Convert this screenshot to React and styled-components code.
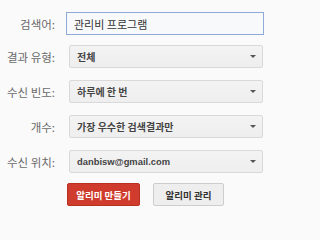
import React from 'react'
import styled, { createGlobalStyle } from 'styled-components'

const Global = createGlobalStyle`
  html, body {
    margin: 0;
    padding: 0;
    background: #fafafa;
  }
  body {
    font-family: "Noto Sans CJK KR", "Liberation Sans", sans-serif;
  }
`

const Form = styled.div`
  width: 270px;
  height: 217px;
  box-sizing: border-box;
  padding: 12px 6px 0 0;
  display: grid;
  grid-template-columns: 55px 1fr;
  column-gap: 11px;
  align-items: center;
  align-content: start;
`

const Label = styled.div`
  text-align: right;
  font-size: 11.5px;
  color: #6a6a6a;
  white-space: nowrap;
  margin-top: ${props => props.$top || '0'};
`

const Control = styled.div`
  margin-top: ${props => props.$top || '0'};
  padding-left: ${props => props.$indent || '0'};
  padding-right: ${props => props.$indentRight || '0'};
`

const Input = styled.div`
  height: 23px;
  box-sizing: border-box;
  border: 1px solid #8fa9d8;
  background: #f8f9fb;
  padding: 0 7px;
  display: flex;
  align-items: center;
  font-size: 11px;
  color: #333;
`

const Select = styled.div`
  height: 23px;
  box-sizing: border-box;
  border: 1px solid #d9d9d9;
  border-radius: 2px;
  background: linear-gradient(#f3f3f3, #eeeeee);
  padding: 0 6px 0 7px;
  display: flex;
  align-items: center;
  justify-content: space-between;
  font-family: ${props => props.$latin ? '"Liberation Sans", Arial, sans-serif' : '"Noto Sans CJK KR", sans-serif'};
  font-size: ${props => props.$latin ? '9.4px' : '10px'};
  font-weight: bold;
  color: #444;
`

const Arrow = styled.span`
  width: 0;
  height: 0;
  border-left: 3px solid transparent;
  border-right: 3px solid transparent;
  border-top: 3px solid #555;
`

const Buttons = styled.div`
  grid-column: 2;
  margin-top: 10px;
  padding-left: 1px;
  display: flex;
  gap: 13px;
`

const Button = styled.div`
  height: 23px;
  box-sizing: border-box;
  width: ${props => props.$w};
  border-radius: 2px;
  display: flex;
  align-items: center;
  justify-content: center;
  font-size: 9.5px;
  font-weight: bold;
  color: ${props => props.$primary ? '#fff' : '#333'};
  background: ${props => props.$primary ? '#cf3b2c' : '#eeeeee'};
  border: 1px solid ${props => props.$primary ? '#b8301f' : '#cdcdcd'};
`

const rows = [
  { label: '결과 유형:', value: '전체' },
  { label: '수신 빈도:', value: '하루에 한 번' },
  { label: '개수:', value: '가장 우수한 검색결과만' },
  { label: '수신 위치:', value: 'danbisw@gmail.com', latin: true },
]

const App = () => (
  <>
    <Global />
    <Form>
      <Label>검색어:</Label>
      <Control>
        <Input>관리비 프로그램</Input>
      </Control>
      {rows.map((r, i) => (
        <React.Fragment key={r.label}>
          <Label $top={i === 0 ? '10px' : '12px'}>{r.label}</Label>
          <Control $top={i === 0 ? '10px' : '12px'} $indent="3px" $indentRight="1px">
            <Select $latin={r.latin}>
              <span>{r.value}</span>
              <Arrow />
            </Select>
          </Control>
        </React.Fragment>
      ))}
      <Buttons>
        <Button $primary $w="73px">알리미 만들기</Button>
        <Button $w="71px">알리미 관리</Button>
      </Buttons>
    </Form>
  </>
)

export default App
